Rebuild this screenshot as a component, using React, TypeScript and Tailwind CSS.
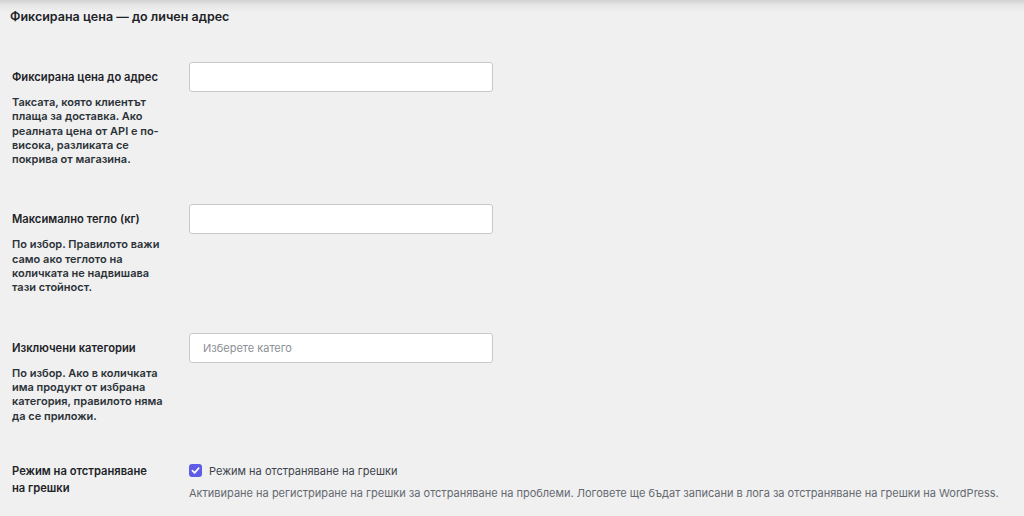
import React from "react";

interface FieldRow {
  label: string;
  help: string;
  placeholder?: string;
}

const rows: FieldRow[] = [
  {
    label: "Фиксирана цена до адрес",
    help: "Таксата, която клиентът плаща за доставка. Ако реалната цена от API е по-висока, разликата се покрива от магазина.",
  },
  {
    label: "Максимално тегло (кг)",
    help: "По избор. Правилото важи само ако теглото на количката не надвишава тази стойност.",
  },
  {
    label: "Изключени категории",
    help: "По избор. Ако в количката има продукт от избрана категория, правилото няма да се приложи.",
    placeholder: "Изберете катего",
  },
];

export default function App() {
  return (
    <div
      lang="bg"
      className="min-h-[516px] w-full bg-[#f0f0f1] bg-[linear-gradient(to_bottom,#d2d2d3_0px,#e6e6e7_5px,#f0f0f1_12px)] font-['Inter','Noto_Sans',sans-serif] text-[#1d2327]"
    >
      <h2 className="pl-[10px] pt-[7px] text-[12.5px] leading-[20px] font-semibold">
        Фиксирана цена — до личен адрес
      </h2>

      <div className="mt-[35px] flex flex-col gap-[38px]">
        {rows.map((row) => (
          <div key={row.label} className="flex">
            <div className="w-[189px] shrink-0 pl-[12px] pt-[8px]">
              <div className="w-[160px] text-[11.2px] leading-[14px] font-semibold">{row.label}</div>
              <p className="mt-[11px] w-[160px] text-[11px] leading-[14.3px] font-semibold text-[#2c3338]">
                {row.help}
              </p>
            </div>
            <div>
              <input
                type="text"
                placeholder={row.placeholder}
                className="h-[30px] w-[304px] rounded-[3px] border border-[#c8c9cc] bg-white px-[13px] text-[11px] text-[#2c3338] placeholder:text-[#8c8f94] outline-none"
              />
            </div>
          </div>
        ))}

        {/* Debug */}
        <div className="flex">
          <div className="w-[189px] shrink-0 pl-[12px] pt-[2px]">
            <div className="w-[140px] text-[11.2px] leading-[17px] font-semibold">
              Режим на отстраняване на грешки
            </div>
          </div>
          <div className="pt-[3px]">
            <label className="flex h-[14px] items-center gap-[7px] text-[11px] text-[#3c434a]">
              <span className="flex h-[13px] w-[13px] items-center justify-center rounded-[3px] bg-[#5e5ce6]">
                <svg width="9" height="9" viewBox="0 0 10 10" fill="none">
                  <path d="M1.5 5.2 L4 7.6 L8.6 2.4" stroke="#ffffff" strokeWidth="1.8" strokeLinecap="round" strokeLinejoin="round" />
                </svg>
              </span>
              Режим на отстраняване на грешки
            </label>
            <p className="mt-[8px] text-[11px] leading-[14px] text-[#646970]">
              Активиране на регистриране на грешки за отстраняване на проблеми. Логовете ще бъдат записани в лога за отстраняване на грешки на WordPress.
            </p>
          </div>
        </div>
      </div>
    </div>
  );
}
